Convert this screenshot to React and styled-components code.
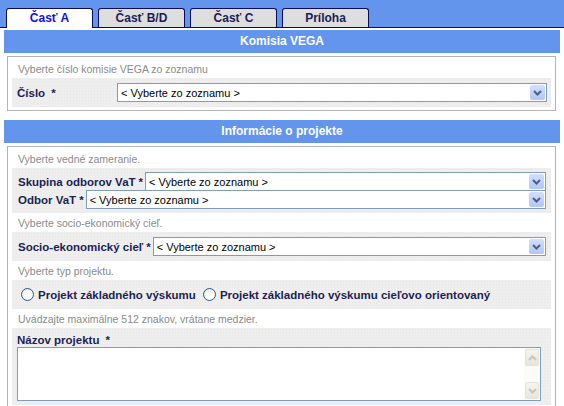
import React from 'react';
import styled, { createGlobalStyle } from 'styled-components';

const GlobalStyle = createGlobalStyle`
  body {
    margin: 0;
    background: #fff;
    font-family: "Liberation Sans", Arial, sans-serif;
  }
`;

const Page = styled.div`
  width: 564px;
  height: 406px;
  overflow: hidden;
`;

const TabStrip = styled.div`
  display: flex;
  gap: 5px;
  height: 19px;
  padding: 8px 0 0 6px;
  background: #6495ed;
  border-bottom: 1px solid #0a0a5c;
`;

const Tab = styled.div`
  width: 85px;
  line-height: 19px;
  text-align: center;
  font-size: 12px;
  font-weight: bold;
  border: 1px solid #0a0a5c;
  border-bottom: none;
  border-radius: 3px 3px 0 0;
  background: ${(p) => (p.$active ? '#fff' : '#dedede')};
  color: ${(p) => (p.$active ? '#1010e8' : '#1c1c5a')};
  height: ${(p) => (p.$active ? '19px' : '18px')};
  margin-bottom: ${(p) => (p.$active ? '-1px' : '0')};
`;

const Header = styled.div`
  margin: ${(p) => p.$top}px 4px 0 4px;
  height: 23px;
  line-height: 23px;
  background: #6495ed;
  color: #fff;
  font-size: 12px;
  font-weight: bold;
  text-align: center;
`;

const Box = styled.div`
  margin: 3px 8px 0 7px;
  border: 1px solid #b4b4b4;
  padding-bottom: 3px;
`;

const Hint = styled.div`
  padding: ${(p) => (p.$tall ? '5px' : '3px')} 10px 2px;
  line-height: 14px;
  font-size: 10.5px;
  color: #8a8a8a;
`;

const Row = styled.div`
  margin: 0 4px;
  padding: ${(p) => p.$pad || '5px 4px 5px 5px'};
  background-color: #efeeee;
  background-image: radial-gradient(#e8e6e6 0.6px, transparent 0.7px);
  background-size: 3px 3px;
  display: flex;
  flex-direction: ${(p) => (p.$column ? 'column' : 'row')};
  align-items: ${(p) => (p.$column ? 'stretch' : 'center')};
`;

const FieldLine = styled.div`
  display: flex;
  align-items: center;
  margin-top: ${(p) => (p.$joined ? '-1px' : '0')};
`;

const Label = styled.span`
  flex: none;
  width: ${(p) => (p.$width ? `${p.$width}px` : 'auto')};
  padding-right: ${(p) => (p.$width ? '0' : '2px')};
  font-size: 11.5px;
  font-weight: bold;
  color: #1b1f52;
  white-space: nowrap;
`;

const Star = styled.span`
  margin-left: ${(p) => p.$gap || 3}px;
`;

const SelectBox = styled.div`
  flex: 1;
  height: 17px;
  margin-top: ${(p) => (p.$joined ? '-1px' : '0')};
  border: 1px solid #7f9db9;
  background: #fff;
  display: flex;
  align-items: center;
  padding-left: 3px;
  font-size: 11px;
  color: #000;
`;

const SelectText = styled.span`
  flex: 1;
  white-space: nowrap;
`;

const DropButton = styled.span`
  width: 15px;
  height: 15px;
  margin-right: 1px;
  border-radius: 2px;
  background: linear-gradient(#d2defc, #b1c6f7);
  display: flex;
  align-items: center;
  justify-content: center;
`;

const RadioRow = styled.div`
  display: flex;
  align-items: center;
  gap: 4px;
  height: 15px;
  font-size: 11.5px;
  font-weight: bold;
  color: #1b1f52;
  white-space: nowrap;
`;

const RadioCircle = styled.span`
  width: 11px;
  height: 11px;
  border-radius: 50%;
  border: 1px solid #2a5a8a;
  background: radial-gradient(circle at 60% 60%, #fff 30%, #dcdcd6 100%);
  margin-left: ${(p) => (p.$first ? '4px' : '3px')};
`;

const TextArea = styled.div`
  margin: 1px 6px 0 0;
  height: 52px;
  border: 1px solid #7f9db9;
  background: #fff;
  display: flex;
  justify-content: flex-end;
`;

const ScrollBar = styled.div`
  width: 16px;
  background: #fbfbf8;
  display: flex;
  flex-direction: column;
  justify-content: space-between;
`;

const ScrollButton = styled.span`
  height: 15px;
  margin: 1px;
  border: 1px solid #e3e3dc;
  border-radius: 2px;
  background: linear-gradient(#f5f5ef, #e6e6dd);
  display: flex;
  align-items: center;
  justify-content: center;
`;

const Chevron = ({ up, color = '#4d5f85' }) => (
  <svg width="9" height="6" viewBox="0 0 9 6">
    <path
      d={up ? 'M1 5 L4.5 1.5 L8 5' : 'M1 1 L4.5 4.5 L8 1'}
      fill="none"
      stroke={color}
      strokeWidth="2"
    />
  </svg>
);

const Select = ({ joined }) => (
  <SelectBox $joined={joined}>
    <SelectText>&lt; Vyberte zo zoznamu &gt;</SelectText>
    <DropButton>
      <Chevron />
    </DropButton>
  </SelectBox>
);

const tabs = ['Časť A', 'Časť B/D', 'Časť C', 'Príloha'];

export default function App() {
  return (
    <Page>
      <GlobalStyle />
      <TabStrip>
        {tabs.map((t, i) => (
          <Tab key={t} $active={i === 0}>
            {t}
          </Tab>
        ))}
      </TabStrip>

      <Header $top={2}>Komisia VEGA</Header>
      <Box>
        <Hint $tall>Vyberte číslo komisie VEGA zo zoznamu</Hint>
        <Row>
          <Label $width={100}>
            Číslo<Star $gap={6}>*</Star>
          </Label>
          <Select />
        </Row>
      </Box>

      <Header $top={9}>Informácie o projekte</Header>
      <Box>
        <Hint $tall>Vyberte vedné zameranie.</Hint>
        <Row $column $pad="4px 5px 4px 6px">
          <FieldLine>
            <Label>
              Skupina odborov VaT<Star>*</Star>
            </Label>
            <Select />
          </FieldLine>
          <FieldLine $joined>
            <Label>
              Odbor VaT<Star>*</Star>
            </Label>
            <Select />
          </FieldLine>
        </Row>
        <Hint>Vyberte socio-ekonomický cieľ.</Hint>
        <Row $pad="5px 5px 5px 6px">
          <Label>
            Socio-ekonomický cieľ<Star>*</Star>
          </Label>
          <Select />
        </Row>
        <Hint>Vyberte typ projektu.</Hint>
        <Row $pad="7px 5px 7px 5px">
          <RadioRow>
            <RadioCircle $first />
            Projekt základného výskumu
            <RadioCircle />
            Projekt základného výskumu cieľovo orientovaný
          </RadioRow>
        </Row>
        <Hint>Uvádzajte maximálne 512 znakov, vrátane medzier.</Hint>
        <Row $column $pad="6px 4px 4px 5px">
          <Label>
            Názov projektu<Star $gap={6}>*</Star>
          </Label>
          <TextArea>
            <ScrollBar>
              <ScrollButton>
                <Chevron up color="#c6c6b8" />
              </ScrollButton>
              <ScrollButton>
                <Chevron color="#c6c6b8" />
              </ScrollButton>
            </ScrollBar>
          </TextArea>
        </Row>
      </Box>
    </Page>
  );
}
